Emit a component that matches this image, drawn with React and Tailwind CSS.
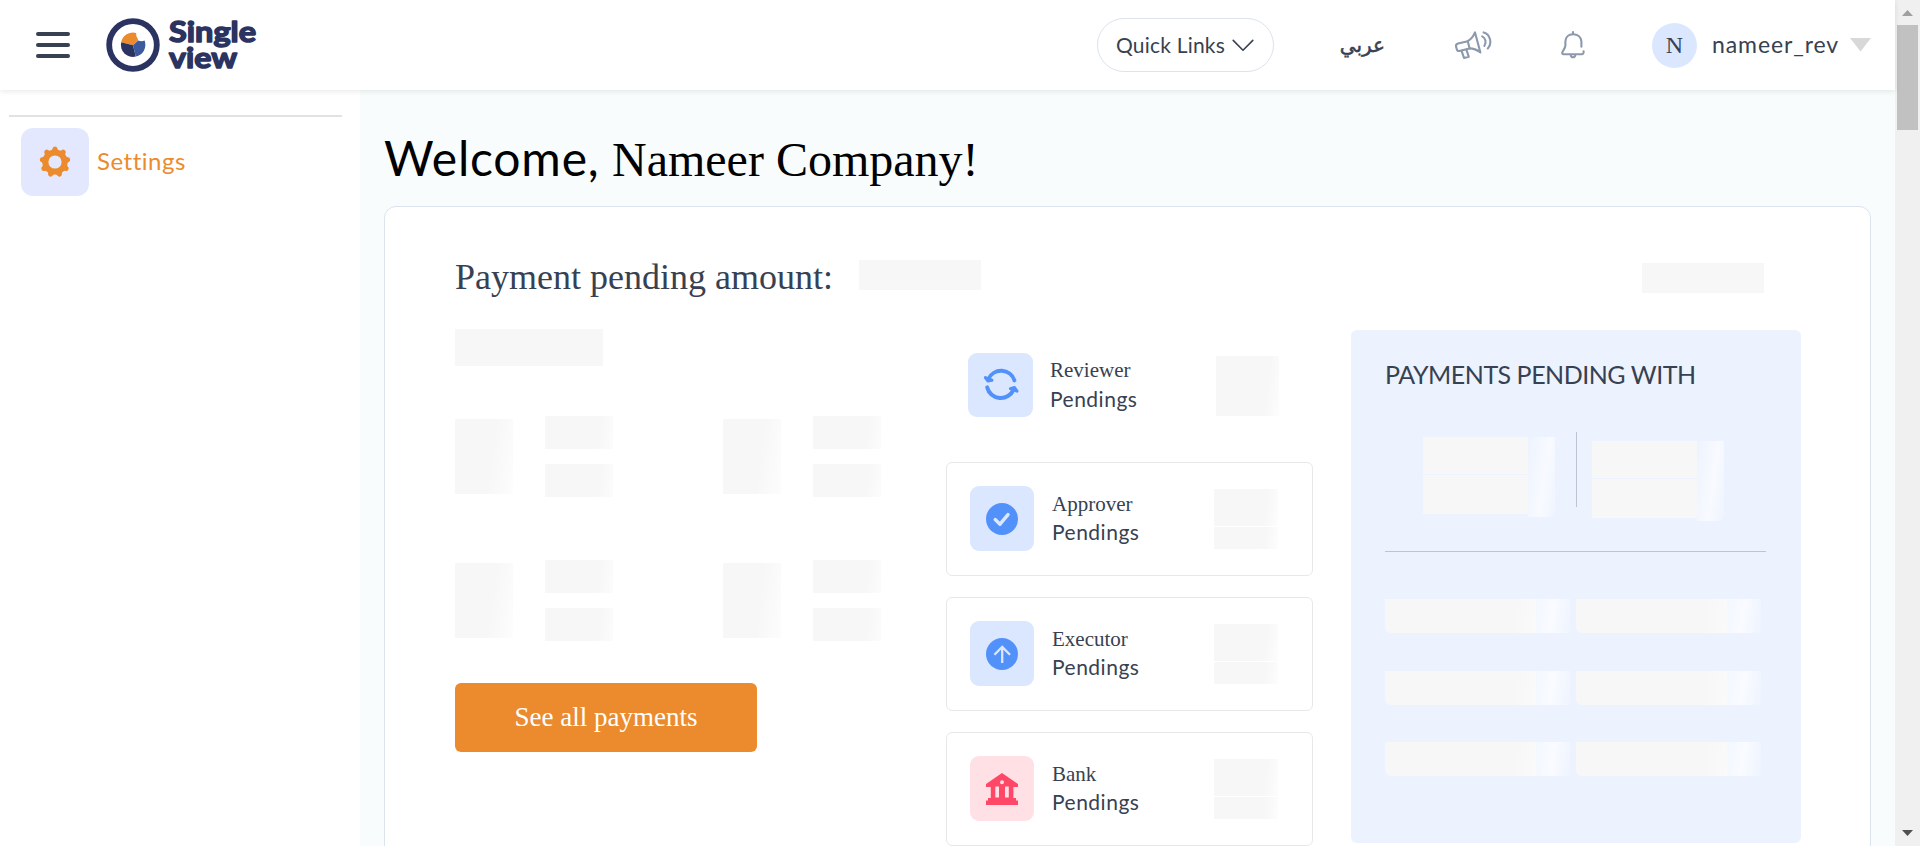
import React from "react";

const serif = "font-['Liberation_Serif',serif]";
const sans = "font-['Lato',sans-serif]";

function Logo() {
  return (
    <svg width="150" height="54" viewBox="0 0 150 54" overflow="visible" className="block shrink-0">
      <circle cx="27" cy="27" r="23.8" fill="none" stroke="#2b3360" strokeWidth="5.8" />
      <path d="M27 27.2 15.2 24.2A12 12 0 0 1 30.2 14.9Q29.8 18.6 31.6 20.6L32.2 22.2Z" fill="#ec8b2d" />
      <path d="M27 27.2 15.2 24.2A12 12 0 0 0 29.8 38.6Z" fill="#2b3360" />
      <path d="M27 27.2 32.2 22.4Q35 23.8 38.6 22.6A12 12 0 0 1 29.8 38.6Z" fill="#3d5a9e" />
      <g
        fontFamily="Lato, sans-serif"
        fontWeight="700"
        fontSize="29"
        fill="#2b3360"
        stroke="#2b3360"
        strokeWidth="1.5"
        strokeLinejoin="round"
      >
        <text x="63" y="24" textLength="87" lengthAdjust="spacingAndGlyphs">Single</text>
        <text x="63" y="50.3" textLength="68" lengthAdjust="spacingAndGlyphs">view</text>
      </g>
    </svg>
  );
}

function Gear() {
  const teeth = [0, 40, 80, 120, 160, 200, 240, 280, 320];
  return (
    <svg width="32" height="32" viewBox="-16 -16 32 32" className="block">
      <circle r="9.6" fill="none" stroke="#ec8b2d" strokeWidth="6" />
      {teeth.map((a) => (
        <path
          key={a}
          d="M-4.6 -10.8Q-2.8 -11.6 -2.4 -13.6Q-2 -15.4 0 -15.4T2.4 -13.6Q2.8 -11.6 4.6 -10.8Z"
          fill="#ec8b2d"
          transform={`rotate(${a})`}
        />
      ))}
    </svg>
  );
}

function Megaphone() {
  return (
    <svg width="38" height="30" viewBox="0 0 38 30" fill="none" stroke="#8c99ad" strokeWidth="2.1" strokeLinejoin="round" strokeLinecap="round" className="block">
      <path d="M13.8 11.2 4 13.4Q1.6 14.2 2 16.4L3 20Q3.6 21.2 5.2 20.9L15.6 18.4Z" />
      <path d="M13.8 11.2Q18.4 8.6 21 2.4L26.4 22.4Q21 18.4 15.6 18.4" />
      <path d="M7.6 20.8 10 28 14.8 26.8 12.4 19.6" />
      <path d="M28.2 6.4C31.6 8 32.6 12.6 30.4 15.8" />
      <path d="M29.6 2.4C36.4 4 38.4 13.6 33.8 18.4" />
    </svg>
  );
}

function Bell() {
  return (
    <svg width="26" height="30" viewBox="0 0 26 30" fill="none" stroke="#8c99ad" strokeWidth="2.1" strokeLinejoin="round" strokeLinecap="round" className="block">
      <path d="M13 2V4" />
      <path d="M21.4 16.8V11.4C21 7 17.4 4.2 13 4.2S5.6 7 5.4 11.4V15.4C5.2 19 2.6 20.2 2.2 23 2.2 24 2.8 24.2 3.4 24.2H21.6C23.2 24.2 23.8 23.2 23.6 21.4" />
      <path d="M10.8 25.2C11 28 15 28 15.2 25.2" />
    </svg>
  );
}

function SyncIcon() {
  return (
    <svg width="36" height="34" viewBox="0 0 36 34" fill="none" stroke="#5391fa" strokeWidth="4" strokeLinecap="round" className="block">
      <path d="M5.4 11A14 14 0 0 1 31.4 12.4" />
      <path d="M4.2 19.4A14 14 0 0 0 30.6 21.6" />
      <path d="M2.4 9.6 4.8 13 9 12.2Z" strokeWidth="3" fill="#5391fa" strokeLinejoin="round" />
      <path d="M27.4 20.6 31.4 19.4 34 23.2Z" strokeWidth="3" fill="#5391fa" strokeLinejoin="round" />
    </svg>
  );
}

function CheckIcon() {
  return (
    <svg width="32" height="32" viewBox="0 0 32 32" className="block">
      <circle cx="16" cy="16" r="16" fill="#5391fa" />
      <path d="M9.2 16.6 14 21.2 22 11.6" fill="none" stroke="#dae7ff" strokeWidth="3.4" strokeLinecap="round" strokeLinejoin="round" />
    </svg>
  );
}

function ArrowUpIcon() {
  return (
    <svg width="32" height="32" viewBox="0 0 32 32" className="block">
      <circle cx="16" cy="16" r="16" fill="#5391fa" />
      <path d="M16.2 25V9M8.4 16.8 16.2 9 24 16.8" fill="none" stroke="#dae7ff" strokeWidth="2.3" />
    </svg>
  );
}

function BankIcon() {
  return (
    <svg width="32" height="32" viewBox="0 0 32 32" className="block">
      <path
        fill="#ff4868"
        fillRule="evenodd"
        d="M16 0 32 11V14H27.4V25H30V27.4H32V32H0V27.4H2V25H4.8V14H0V11ZM16 7.2A2 2 0 1 0 16 11.2A2 2 0 1 0 16 7.2ZM9.3 13.4V24.6H13V13.4ZM19 13.4V24.6H22.8V13.4Z"
      />
    </svg>
  );
}

function PaymentStat() {
  return (
    <div className="flex h-[81px] w-[268px] items-center gap-8">
      <div className="h-[75px] w-[58px] bg-[linear-gradient(97deg,#f7f7f7_62%,#fdfdfd_100%)]" />
      <div className="flex flex-col gap-[15px]">
        <div className="h-[33px] w-[68px] bg-[linear-gradient(97deg,#f7f7f7_78%,#fcfcfc_100%)]" />
        <div className="h-[33px] w-[68px] bg-[linear-gradient(97deg,#f7f7f7_78%,#fcfcfc_100%)]" />
      </div>
    </div>
  );
}

function PendingCard({ name, tone, icon }) {
  return (
    <div className="flex h-[114px] w-[367px] shrink-0 rounded-[6px] border border-[#e8e8e8] pt-[23px] pl-[23px]">
      <div className={`flex h-[65px] w-16 shrink-0 items-center justify-center rounded-[9px] ${tone}`}>{icon}</div>
      <div className="ml-[18px] w-[162px] pt-[5px] text-[#374151]">
        <div className={`text-[21px] leading-[27px] ${serif}`}>{name}</div>
        <div className={`text-[21px] leading-[28px] tracking-[0.5px] ${sans}`}>Pendings</div>
      </div>
      <div className="mt-[3px] flex h-[60px] w-16 flex-col gap-px">
        <div className="h-[37px] bg-[linear-gradient(97deg,#f7f7f7_78%,#fdfdfd_100%)]" />
        <div className="h-[22px] bg-[linear-gradient(97deg,#f7f7f7_78%,#fdfdfd_100%)]" />
      </div>
    </div>
  );
}

function SplitSkeleton() {
  return (
    <div className="flex">
      <div className="flex w-[105px] flex-col gap-px">
        <div className="h-[37px] bg-[#f7f7f7]" />
        <div className="h-[39px] bg-[#f7f7f7]" />
      </div>
      <div className="h-[80px] w-[27px] rounded-br-[6px] bg-[linear-gradient(98deg,#edf3fe_0%,#f8faff_58%,#eef4fe_100%)]" />
    </div>
  );
}

function RowSkeleton() {
  return (
    <div className="flex h-[34px]">
      <div className="w-[151px] rounded-bl-[6px] bg-[linear-gradient(98deg,#f7f7f7_84%,#fafafb_100%)]" />
      <div className="w-[34px] bg-[linear-gradient(98deg,#f3f8ff_0%,#f9fbff_48%,#eef4fe_100%)]" />
    </div>
  );
}

export default function App() {
  return (
    <div className="flex h-[846px] w-[1920px] overflow-hidden bg-white">
      <div className="flex w-[1895px] flex-col">
        <header className="relative z-10 flex h-[90px] shrink-0 items-center bg-white shadow-[0_1px_6px_rgba(0,0,0,0.10)]">
          <div className="mb-px ml-9 flex w-[34px] flex-col gap-[7px]">
            <div className="h-1 rounded-full bg-[#374151]" />
            <div className="h-1 rounded-full bg-[#374151]" />
            <div className="h-1 rounded-full bg-[#374151]" />
          </div>
          <div className="ml-9"><Logo /></div>
          <div className="ml-auto flex items-center">
            <button className={`flex h-[54px] w-[177px] items-center rounded-full border border-[#dbe3ec] pl-[18px] text-[21px] tracking-[0.2px] text-[#374151] ${sans}`}>
              Quick Links
              <svg width="22" height="13" viewBox="0 0 22 13" fill="none" stroke="#374151" strokeWidth="1.6" strokeLinecap="round" strokeLinejoin="round" className="ml-[7px]">
                <path d="M1.2 1.4 11 11.2 20.8 1.4" />
              </svg>
            </button>
            <div className="ml-[68px] w-[43px] text-[20px] leading-none text-[#374151] [-webkit-text-stroke:0.5px_#374151] font-['DejaVu_Sans',sans-serif]" dir="rtl">عربي</div>
            <div className="ml-[69px]"><Megaphone /></div>
            <div className="ml-[68px]"><Bell /></div>
            <div className={`ml-[66px] flex h-[45px] w-[45px] items-center justify-center rounded-full bg-[#dbe7ff] text-[24px] text-[#374151] ${serif}`}>N</div>
            <div className={`-mt-0.5 ml-[15px] w-[127px] text-[23px] tracking-[0.9px] text-[#374151] ${sans}`}>nameer_rev</div>
            <svg width="21" height="14" viewBox="0 0 21 14" className="mr-6 ml-[11px]">
              <path d="M0 0H21L10.5 13.6Z" fill="#d8d8d8" />
            </svg>
          </div>
        </header>

        <div className="flex min-h-0 flex-1">
          <aside className="w-[360px] shrink-0 bg-white">
            <div className="mt-[25px] ml-[9px] h-[1.5px] w-[333px] bg-[#e2e2e2]" />
            <div className="mt-[11.5px] ml-[21px] flex items-center">
              <div className="flex h-[68px] w-[68px] items-center justify-center rounded-xl bg-[#e3e8ff]"><Gear /></div>
              <div className={`mb-[3px] ml-2 text-[24px] leading-none tracking-[0.5px] text-[#ec8b2d] ${sans}`}>Settings</div>
            </div>
          </aside>

          <main className="flex w-[1535px] flex-col bg-[#f8fcfd] pl-6">
            <h1 className="flex h-[116px] shrink-0 items-baseline pt-[38px] text-[48px] leading-[60px] text-black">
              <span className={`inline-block w-[228px] tracking-[0.8px] ${sans}`}>Welcome,</span>
              <span className={serif}>Nameer Company!</span>
            </h1>
            <section className="h-[700px] w-[1487px] shrink-0 rounded-xl border border-[#dbe3ec] bg-white pl-[70px]">
              <div className="flex h-[122px] pt-[52px]">
                <div className={`w-[404px] text-[36px] leading-[36px] text-[#374151] ${serif}`}>Payment pending amount:</div>
                <div className="mt-px h-[30px] w-[122px] bg-[#f7f7f7]" />
                <div className="mt-1 ml-[661px] h-[30px] w-[122px] bg-[#f7f7f7]" />
              </div>

              <div className="flex">
                <div className="w-[491px]">
                  <div className="h-[37px] w-[148px] bg-[#f7f7f7]" />
                  <div className="mt-[50px] grid grid-cols-[268px_223px] gap-y-[63px]">
                    <PaymentStat />
                    <PaymentStat />
                    <PaymentStat />
                    <PaymentStat />
                  </div>
                  <button className={`mt-[42px] flex h-[69px] w-[302px] items-center justify-center rounded-[6px] bg-[#ec8b2d] text-[27px] text-white ${serif}`}>
                    See all payments
                  </button>
                </div>

                <div className="flex w-[405px] flex-col">
                  <div className="flex h-[133px] pt-6 pl-[22px]">
                    <div className="flex h-16 w-[65px] items-center justify-center rounded-[9px] bg-[#dae7ff]"><SyncIcon /></div>
                    <div className="ml-[17px] w-[166px] pt-[3px] text-[#374151]">
                      <div className={`text-[21px] leading-[28px] ${serif}`}>Reviewer</div>
                      <div className={`text-[21px] leading-[29px] tracking-[0.5px] ${sans}`}>Pendings</div>
                    </div>
                    <div className="mt-[3px] h-[60px] w-[63px] bg-[linear-gradient(97deg,#f7f7f7_78%,#fdfdfd_100%)]" />
                  </div>
                  <div className="flex flex-col gap-[21px]">
                    <PendingCard name="Approver" tone="bg-[#dae7ff]" icon={<CheckIcon />} />
                    <PendingCard name="Executor" tone="bg-[#dae7ff]" icon={<ArrowUpIcon />} />
                    <PendingCard name="Bank" tone="bg-[#ffe0e5]" icon={<BankIcon />} />
                  </div>
                </div>

                <div className="mt-px h-[513px] w-[450px] rounded-[6px] bg-[#ecf3fe] px-[34px] pt-[28px]">
                  <div className={`text-[25px] leading-[32px] tracking-[-0.48px] whitespace-nowrap text-[#374151] ${sans}`}>PAYMENTS PENDING WITH</div>
                  <div className="mt-[42px] flex h-[120px] w-[381px] border-b border-[#bcc5d3] pl-[38px]">
                    <div className="mt-[5px]"><SplitSkeleton /></div>
                    <div className="mr-[15px] ml-[21px] h-[75px] w-px bg-[#bcc5d3]" />
                    <div className="mt-[9px]"><SplitSkeleton /></div>
                  </div>
                  <div className="mt-[47px] grid grid-cols-[185px_185px] gap-x-[6px] gap-y-[37.5px]">
                    <RowSkeleton />
                    <RowSkeleton />
                    <RowSkeleton />
                    <RowSkeleton />
                    <RowSkeleton />
                    <RowSkeleton />
                  </div>
                </div>
              </div>
            </section>
          </main>
        </div>
      </div>

      <div className="flex w-[25px] flex-col items-center bg-[#f0f0f0]">
        <svg width="11" height="6" viewBox="0 0 11 6" className="mt-[10px] block">
          <path d="M0 6H11L5.5 0Z" fill="#a0a0a0" />
        </svg>
        <div className="mt-[9px] h-[105px] w-[21px] bg-[#c1c1c1]" />
        <svg width="11" height="6" viewBox="0 0 11 6" className="mt-auto mb-[10px] block">
          <path d="M0 0H11L5.5 6Z" fill="#505050" />
        </svg>
      </div>
    </div>
  );
}
